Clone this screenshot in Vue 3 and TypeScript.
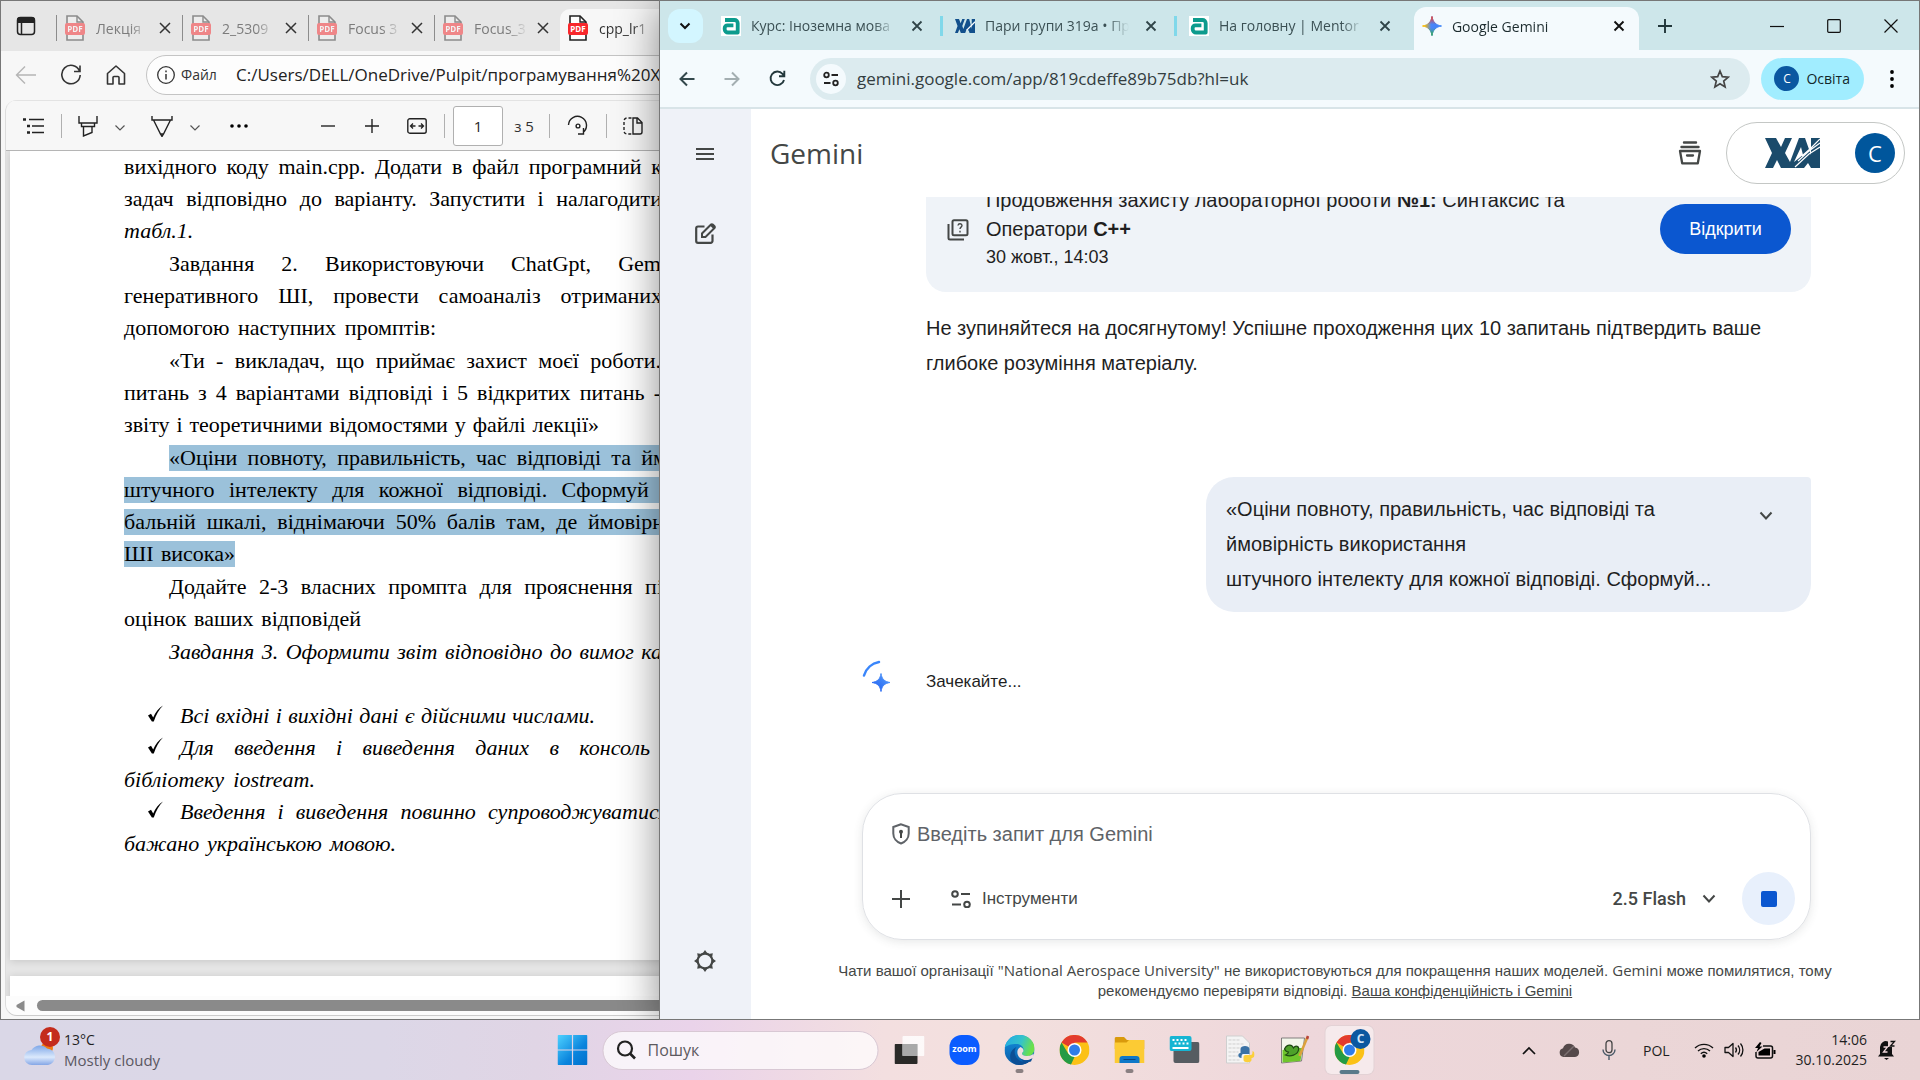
<script setup lang="ts">
interface DocLine {
  text: string
  /** Width of a justified line; natural width when absent. */
  width?: number
  indent?: boolean
  italic?: boolean
  marked?: boolean
  bullet?: boolean
}

const edgeTabs = [
  { title: 'Лекція' },
  { title: '2_5309' },
  { title: 'Focus 3' },
  { title: 'Focus_3' },
]

const chromeTabs = [
  { title: 'Курс: Іноземна мова', icon: 'mentor' },
  { title: 'Пари групи 319а • Пр', icon: 'xai' },
  { title: 'На головну | Mentor', icon: 'mentor' },
]

const paragraphs: DocLine[][] = [
  [
    { text: 'вихідного коду main.cpp. Додати в файл програмний к', width: 538 },
    { text: 'задач відповідно до варіанту. Запустити і налагодити', width: 538 },
    { text: 'табл.1.', italic: true },
  ],
  [
    { text: 'Завдання 2. Використовуючи ChatGpt, Gem', width: 492, indent: true },
    { text: 'генеративного ШІ, провести самоаналіз отриманих', width: 538 },
    { text: 'допомогою наступних промптів:', width: 312 },
  ],
  [
    { text: '«Ти - викладач, що приймає захист моєї роботи.', width: 492, indent: true },
    { text: 'питань з 4 варіантами відповіді і 5 відкритих питань -', width: 537 },
    { text: 'звіту і теоретичними відомостями у файлі лекції»', width: 475 },
  ],
  [
    { text: '«Оціни повноту, правильність, час відповіді та йм', width: 498, indent: true, marked: true },
    { text: 'штучного інтелекту для кожної відповіді. Сформуй з', width: 548, marked: true },
    { text: 'бальній шкалі, віднімаючи 50% балів там, де ймовірн', width: 540, marked: true },
    { text: 'ШІ висока»', width: 111, marked: true },
  ],
  [
    { text: 'Додайте 2-3 власних промпта для прояснення пі', width: 494, indent: true },
    { text: 'оцінок ваших відповідей', width: 237 },
  ],
  [
    { text: 'Завдання 3. Оформити звіт відповідно до вимог ка', width: 493, indent: true, italic: true },
    { text: '\u00a0' },
    { text: 'Всі вхідні і вихідні дані є дійсними числами.', width: 415, italic: true, bullet: true },
    { text: 'Для введення і виведення даних в консоль', width: 470, italic: true, bullet: true },
    { text: 'бібліотеку iostream.', width: 191, italic: true },
    { text: 'Введення і виведення повинно супроводжуватися', width: 489, italic: true, bullet: true },
    { text: 'бажано українською мовою.', width: 272, italic: true },
  ],
]
</script>

<template>
  <div class="desktop">
    <section class="edge" aria-label="Microsoft Edge">
      <div class="edge-tabs">
        <button class="edge-side" aria-label="Вкладки">
          <svg width="20" height="20" viewBox="0 0 20 20"><rect x="1.5" y="1.5" width="17" height="17" rx="3" fill="none" stroke="#222" stroke-width="1.5" /><path d="M1 7V4a3 3 0 0 1 3-3h12a3 3 0 0 1 3 3v3z" fill="#222" /><path d="M5.5 7v11" stroke="#222" stroke-width="1.5" /></svg>
        </button>
        <div v-for="t in edgeTabs" :key="t.title" class="edge-tab">
          <span class="pdf"><svg width="20" height="26" viewBox="0 0 20 26"><path d="M2 1h10l6 6v18H2z" fill="#f4f4f4" stroke="#333" stroke-width="1.6" /><path d="M12 1v6h6" fill="none" stroke="#333" stroke-width="1.4" /></svg><b>PDF</b></span>
          <span class="edge-title">{{ t.title }}</span>
          <button class="x" aria-label="Закрити"><svg width="12" height="12" viewBox="0 0 12 12"><path d="M1 1l10 10M11 1L1 11" stroke="#333" stroke-width="1.5" /></svg></button>
        </div>
        <div class="edge-tab on">
          <span class="pdf"><svg width="20" height="26" viewBox="0 0 20 26"><path d="M2 1h10l6 6v18H2z" fill="#fff" stroke="#222" stroke-width="1.6" /><path d="M12 1v6h6" fill="none" stroke="#222" stroke-width="1.4" /></svg><b>PDF</b></span>
          <span class="edge-title">cpp_lr1</span>
        </div>
      </div>

      <div class="edge-bar">
        <button aria-label="Назад"><svg width="22" height="22" viewBox="0 0 22 22"><path d="M21 11H2M10 2.500L1.500 11l8.500 8.500" fill="none" stroke="#b5b5b5" stroke-width="1.4" /></svg></button>
        <button aria-label="Оновити"><svg width="22" height="22" viewBox="0 0 22 22"><path d="M19.500 7A9.200 9.200 0 1 0 20.200 11M20 1.500V7.500H14" fill="none" stroke="#333" stroke-width="1.600" /></svg></button>
        <button aria-label="Головна"><svg width="22" height="22" viewBox="0 0 22 22"><path d="M2.500 9.500L11 2l8.500 7.500V20H14v-6.500a1 1 0 0 0-1-1H9a1 1 0 0 0-1 1V20H2.500z" fill="none" stroke="#333" stroke-width="1.600" stroke-linejoin="round" /></svg></button>
        <label class="edge-url">
          <svg width="20" height="20" viewBox="0 0 20 20"><circle cx="10" cy="10" r="8.300" fill="none" stroke="#333" stroke-width="1.300" /><path d="M10 9v5.500M10 5.500v1.800" stroke="#333" stroke-width="1.500" /></svg>
          <span>Файл</span>
          <input type="text" value="C:/Users/DELL/OneDrive/Pulpit/програмування%20ХАІ/cpp_lr1.pdf" />
        </label>
      </div>

      <div class="viewer">
        <div class="pdf-bar">
          <button class="b-toc" aria-label="Зміст"><svg width="22" height="18" viewBox="0 0 22 18"><path d="M6 2.500h15M9 9h12M9 15.500h12" stroke="#222" stroke-width="1.500" /><path d="M0 2.500h3M4 9h3M4 15.500h3" stroke="#222" stroke-width="2.400" /></svg></button>
          <i class="bar-sep s1"></i>
          <button class="b-mark" aria-label="Виділити"><svg width="20" height="22" viewBox="0 0 20 22"><path d="M1 1v7h18V1M3.500 8v3.500h13V8M5.500 11.500V21l8.500-3.500v-6" fill="none" stroke="#222" stroke-width="1.400" /></svg></button>
          <button class="b-chev" aria-label="Колір виділення"><svg width="12" height="8" viewBox="0 0 12 8"><path d="M1.500 1.500L6 6l4.500-4.500" fill="none" stroke="#555" stroke-width="1.200" /></svg></button>
          <button class="b-pen" aria-label="Малювати"><svg width="22" height="22" viewBox="0 0 22 22"><path d="M1 1v4h20V1M2.500 5L9.500 19h3l7-14M9.500 19l1.500 2.500 1.500-2.500" fill="none" stroke="#222" stroke-width="1.400" /></svg></button>
          <button class="b-chev" aria-label="Колір пера"><svg width="12" height="8" viewBox="0 0 12 8"><path d="M1.500 1.500L6 6l4.500-4.500" fill="none" stroke="#555" stroke-width="1.200" /></svg></button>
          <button class="b-more" aria-label="Більше"><svg width="18" height="4" viewBox="0 0 18 4"><circle cx="2" cy="2" r="1.800" /><circle cx="9" cy="2" r="1.800" /><circle cx="16" cy="2" r="1.800" /></svg></button>
          <button class="b-minus" aria-label="Зменшити"><svg width="14" height="14" viewBox="0 0 14 14"><path d="M0 7h14" stroke="#333" stroke-width="1.300" /></svg></button>
          <button class="b-plus" aria-label="Збільшити"><svg width="14" height="14" viewBox="0 0 14 14"><path d="M0 7h14M7 0v14" stroke="#222" stroke-width="1.400" /></svg></button>
          <button class="b-fit" aria-label="За шириною"><svg width="20" height="16" viewBox="0 0 20 16"><rect x=".8" y=".8" width="18.400" height="14.400" rx="2" fill="none" stroke="#222" stroke-width="1.400" /><path d="M3.500 8h5M11.500 8h5M6 5.500L3.500 8 6 10.500M14 5.500L16.500 8 14 10.500" fill="none" stroke="#222" stroke-width="1.300" /></svg></button>
          <i class="bar-sep s2"></i>
          <input id="page-no" class="page-no" type="text" value="1" />
          <label class="page-of" for="page-no">з 5</label>
          <i class="bar-sep s3"></i>
          <button class="b-rot" aria-label="Повернути"><svg width="22" height="22" viewBox="0 0 22 22"><path d="M1.500 10A9 9 0 1 1 16 17.500M16.500 13v6h-5.500" fill="none" stroke="#222" stroke-width="1.400" /><circle cx="11" cy="11" r="1.900" fill="none" stroke="#222" stroke-width="1.400" /></svg></button>
          <i class="bar-sep s4"></i>
          <button class="b-view" aria-label="Вигляд сторінки"><svg width="20" height="18" viewBox="0 0 20 18"><path d="M8.500 1H4a3 3 0 0 0-3 3v10a3 3 0 0 0 3 3h4.500" fill="none" stroke="#222" stroke-width="1.400" stroke-dasharray="3 2" /><path d="M10 1h4.500L19 5.500V15a2 2 0 0 1-2 2h-7zM14 1v5h5" fill="none" stroke="#222" stroke-width="1.400" /></svg></button>
        </div>
        <div class="pages">
          <article class="page">
            <div v-for="(p, i) in paragraphs" :key="i" class="para">
              <div v-for="(l, j) in p" :key="j" class="line" :class="{ indent: l.indent, italic: l.italic, bulleted: l.bullet }">
                <svg v-if="l.bullet" class="tick" width="17" height="17" viewBox="0 0 17 17"><path d="M1 10.500l3-1.800 2.200 3.800C8.500 7 11.500 3 16 .5 12 4.500 9 10 6.800 16.500H4.900z" /></svg>
                <span class="run" :class="{ marked: l.marked, justified: l.width }" :style="l.width ? { width: l.width + 'px' } : undefined">{{ l.text }}</span>
              </div>
            </div>
          </article>
          <div class="page next"></div>
        </div>
        <div class="hscroll">
          <svg width="9" height="12" viewBox="0 0 9 12"><path d="M8.500 .5v11L.5 7V5z" fill="#8a8a8a" /></svg>
          <div class="thumb"></div>
        </div>
      </div>
    </section>

    <section class="chrome" aria-label="Google Chrome">
      <div class="strip">
        <button class="tab-search" aria-label="Пошук вкладок"><svg width="12" height="8" viewBox="0 0 12 8"><path d="M1.500 1.500L6 6l4.500-4.500" fill="none" stroke="#111" stroke-width="2" /></svg></button>
        <div v-for="(t, i) in chromeTabs" :key="i" class="ctab">
          <svg v-if="t.icon === 'mentor'" width="20" height="20" viewBox="0 0 20 20"><path d="M0 0h20v20H0z" fill="#fff" /><path d="M4 4h9.500a3.200 3.200 0 0 1 3.200 3.200V16.500H7a3.300 3.300 0 0 1-3.300-3.300V12a2.700 2.700 0 0 1 2.700-2.700h6" fill="none" stroke="#0c9b8d" stroke-width="3.800" stroke-linejoin="round" /></svg>
          <svg v-else width="20" height="14" viewBox="0 0 55 30" preserveAspectRatio="none"><path d="M0 0h11l4.500 9L20 0h7l-7 15 7 15H16l-4-8-4 8H0l7-15zM33 0h6l10 30h-9l-2-5-6-3-4 8h-9zM46 0h9v30h-9z" fill="#12508c" /><path d="M32 24L55 6" stroke="#fff" stroke-width="3" /></svg>
          <span class="ctitle">{{ t.title }}</span>
          <button class="x" aria-label="Закрити"><svg width="12" height="12" viewBox="0 0 12 12"><path d="M1.500 1.500l9 9M10.500 1.500l-9 9" stroke="#2f4448" stroke-width="1.800" /></svg></button>
        </div>
        <div class="ctab active">
          <svg width="20" height="20" viewBox="0 0 20 20">
            <defs>
              <linearGradient id="gemA" x1="0" y1="0" x2="1" y2="0"><stop offset=".1" stop-color="#fbbc04" /><stop offset=".45" stop-color="#4b86f8" /><stop offset="1" stop-color="#3b82f6" /></linearGradient>
              <linearGradient id="gemB" x1="0" y1="0" x2="0" y2="1"><stop offset="0" stop-color="#ea4335" /><stop offset=".42" stop-color="#ea4335" stop-opacity="0" /><stop offset=".6" stop-color="#34a853" stop-opacity="0" /><stop offset="1" stop-color="#34a853" /></linearGradient>
            </defs>
            <path d="M10 .5C10.800 6 14 9.200 19.500 10 14 10.800 10.800 14 10 19.500 9.200 14 6 10.800 .5 10 6 9.200 9.200 6 10 .5z" fill="url(#gemA)" stroke="url(#gemA)" />
            <path d="M10 .5C10.800 6 14 9.200 19.500 10 14 10.800 10.800 14 10 19.500 9.200 14 6 10.800 .5 10 6 9.200 9.200 6 10 .5z" fill="url(#gemB)" stroke="url(#gemB)" />
          </svg>
          <span class="ctitle">Google Gemini</span>
          <button class="x" aria-label="Закрити"><svg width="12" height="12" viewBox="0 0 12 12"><path d="M1.500 1.500l9 9M10.500 1.500l-9 9" stroke="#111" stroke-width="1.900" /></svg></button>
        </div>
        <button class="new-tab" aria-label="Нова вкладка"><svg width="14" height="14" viewBox="0 0 14 14"><path d="M0 7h14M7 0v14" stroke="#22373b" stroke-width="1.900" /></svg></button>
        <div class="win-btns">
          <button aria-label="Згорнути"><svg width="14" height="14" viewBox="0 0 14 14"><path d="M0 7.500h14" stroke="#111" stroke-width="1.200" /></svg></button>
          <button aria-label="Розгорнути"><svg width="14" height="14" viewBox="0 0 14 14"><rect x=".7" y=".7" width="12.600" height="12.600" rx="1" fill="none" stroke="#111" stroke-width="1.200" /></svg></button>
          <button aria-label="Закрити вікно"><svg width="14" height="14" viewBox="0 0 14 14"><path d="M.5 .5l13 13M13.500 .5l-13 13" stroke="#111" stroke-width="1.200" /></svg></button>
        </div>
      </div>

      <div class="cbar">
        <button class="nav" aria-label="Назад"><svg width="16" height="16" viewBox="0 0 16 16"><path d="M15.500 8H2M8 1.500L1.500 8 8 14.500" fill="none" stroke="#33484c" stroke-width="2" /></svg></button>
        <button class="nav" aria-label="Вперед"><svg width="16" height="16" viewBox="0 0 16 16"><path d="M.5 8H14M8 1.500L14.500 8 8 14.500" fill="none" stroke="#a3aeb1" stroke-width="2" /></svg></button>
        <button class="nav" aria-label="Перезавантажити"><svg width="17" height="17" viewBox="0 0 17 17"><path d="M15 10A6.800 6.800 0 1 1 13.500 3.800L15 5.500M15.300 .8v5.400H10" fill="none" stroke="#22373b" stroke-width="1.900" /></svg></button>
        <div class="omni">
          <button class="tune" aria-label="Відомості про сайт"><svg width="16" height="16" viewBox="0 0 16 16"><circle cx="3.500" cy="4" r="2.300" fill="none" stroke="#222" stroke-width="1.800" /><path d="M8.500 4H15M1 12h6.500" stroke="#222" stroke-width="1.900" /><circle cx="12.500" cy="12" r="2.300" fill="none" stroke="#222" stroke-width="1.800" /></svg></button>
          <input type="text" aria-label="Адресний рядок" value="gemini.google.com/app/819cdeffe89b75db?hl=uk" />
          <button class="star" aria-label="Додати закладку"><svg width="20" height="20" viewBox="0 0 20 20"><path d="M10 2l2.300 5.600 6 .5-4.600 3.900 1.400 5.900L10 14.800 4.900 17.900l1.400-5.900L1.700 8.100l6-.5z" fill="none" stroke="#444" stroke-width="1.700" /></svg></button>
        </div>
        <button class="profile"><span class="dot-c">C</span>Освіта</button>
        <button class="kebab" aria-label="Меню"><svg width="4" height="18" viewBox="0 0 4 18"><circle cx="2" cy="2" r="1.900" /><circle cx="2" cy="9" r="1.900" /><circle cx="2" cy="16" r="1.900" /></svg></button>
      </div>

      <div class="app">
        <nav class="side">
          <button aria-label="Головне меню"><svg width="18" height="12" viewBox="0 0 18 12"><path d="M0 1h18M0 6h18M0 11h18" stroke="#444746" stroke-width="2" /></svg></button>
          <button class="compose" aria-label="Новий чат"><svg width="22" height="22" viewBox="0 0 22 22"><path d="M10.500 3.500H4a1.800 1.800 0 0 0-1.800 1.800V18A1.800 1.800 0 0 0 4 19.800h12.700a1.800 1.800 0 0 0 1.800-1.800v-6.500" fill="none" stroke="#444746" stroke-width="2.200" /><path d="M8 14v-3.500l9-9a1.200 1.200 0 0 1 1.700 0l1.800 1.800a1.200 1.200 0 0 1 0 1.700l-9 9z" fill="none" stroke="#444746" stroke-width="2" /><path d="M16 2.500l3.500 3.500 1.500-1.800L18 1z" fill="#444746" /></svg></button>
          <button class="gear" aria-label="Налаштування"><svg width="22" height="22" viewBox="0 0 22 22"><circle cx="11" cy="11" r="7.300" fill="none" stroke="#444746" stroke-width="2.200" /><path d="M11 0l2.500 3.500h-5zM11 22l2.500-3.500h-5zM0 11l3.500-2.500v5zM22 11l-3.500-2.500v5zM3.200 3.200l4.200.7-3.500 3.500zM18.800 3.200l-4.200.7 3.500 3.500zM3.200 18.800l4.200-.7-3.500-3.500zM18.800 18.800l-4.200-.7 3.500-3.500z" fill="#444746" /></svg></button>
        </nav>

        <main class="main">
          <header class="head">
            <h1>Gemini</h1>
            <button class="archive" aria-label="Архів"><svg width="24" height="24" viewBox="0 0 24 24"><path d="M6 1.500h12M3.500 6h17" stroke="#444746" stroke-width="2.400" stroke-linecap="round" /><path d="M2 10h20l-2.200 12.300H4.200zM9 14.500h6" fill="none" stroke="#444746" stroke-width="2.300" stroke-linejoin="round" stroke-linecap="round" /></svg></button>
            <div class="org">
              <svg width="55" height="30" viewBox="0 0 55 30"><path d="M0 0h11l5 9 4-9h7l-7 15 5 9L34 0h6l6 17V0h9v30h-9l-3-5-4 5h-9l3-5-3 5H16l-4-8-4 8H0l7-15z" fill="#1b4b6b" /><path d="M29 24L36 9l2 8z" fill="#fff" /><path d="M30 29L44 16 55 9M33 23L44 13 55 5M37 18L46 10 55 1" fill="none" stroke="#fff" stroke-width="1.200" /></svg>
              <button class="avatar">C</button>
            </div>
          </header>

          <div class="chat">
            <div class="card">
              <svg class="quiz" width="22" height="22" viewBox="0 0 22 22"><rect x="5.500" y="1.300" width="15" height="15" rx="1.500" fill="none" stroke="#444746" stroke-width="2" /><path d="M1.500 5v14a1.500 1.500 0 0 0 1.500 1.500h14" fill="none" stroke="#444746" stroke-width="2" /><path d="M11 6.500c.3-2.400 4-2.200 4 0 0 1.700-2 1.600-2 3.500M13 11.800v1.600" fill="none" stroke="#444746" stroke-width="1.400" /></svg>
              <div class="card-text">
                <p>Продовження захисту лабораторної роботи <b>№1:</b> Синтаксис та<br />Оператори <b>C++</b></p>
                <time>30 жовт., 14:03</time>
              </div>
              <button class="open">Відкрити</button>
            </div>
            <p class="reply">Не зупиняйтеся на досягнутому! Успішне проходження цих 10 запитань підтвердить ваше глибоке розуміння матеріалу.</p>
            <div class="bubble">
              <p>«Оціни повноту, правильність, час відповіді та<br />ймовірність використання<br />штучного інтелекту для кожної відповіді. Сформуй...</p>
              <button aria-label="Розгорнути текст"><svg width="14" height="10" viewBox="0 0 14 10"><path d="M1.500 1.500L7 7.500l5.500-6" fill="none" stroke="#444746" stroke-width="2" /></svg></button>
            </div>
            <div class="wait">
              <svg width="32" height="32" viewBox="0 0 32 32">
                <defs><linearGradient id="sp" x1="0" y1="1" x2="1" y2="0"><stop offset="0" stop-color="#1d5bf0" /><stop offset="1" stop-color="#5aa2fb" /></linearGradient></defs>
                <path d="M2 15.500A19 19 0 0 1 17 2" fill="none" stroke="#3a86fb" stroke-width="2.500" stroke-linecap="round" />
                <path d="M19 13.500c.8 5.500 3.500 8.200 9 9-5.500.8-8.200 3.500-9 9-.8-5.500-3.500-8.200-9-9 5.500-.8 8.200-3.500 9-9z" fill="url(#sp)" stroke="url(#sp)" />
              </svg>
              <p>Зачекайте...</p>
            </div>
          </div>

          <footer class="foot">
            <form class="prompt" @submit.prevent>
              <label class="ask">
                <svg width="18" height="22" viewBox="0 0 18 22"><path d="M9 1.300L1.300 4v6.500c0 4.500 3.200 8.500 7.700 10 4.500-1.500 7.700-5.500 7.700-10V4z" fill="none" stroke="#5f6368" stroke-width="2" /><circle cx="9" cy="8.800" r="2" fill="#444746" /><path d="M9 9v6" stroke="#444746" stroke-width="2" /></svg>
                <input type="text" placeholder="Введіть запит для Gemini" />
              </label>
              <div class="tools">
                <button type="button" class="add" aria-label="Додати файли"><svg width="18" height="18" viewBox="0 0 18 18"><path d="M0 9h18M9 0v18" stroke="#444746" stroke-width="2" /></svg></button>
                <button type="button" class="instr"><svg width="20" height="18" viewBox="0 0 20 18"><circle cx="4" cy="4" r="2.800" fill="none" stroke="#444746" stroke-width="2" /><path d="M10 4h9M1 14.500h9" stroke="#444746" stroke-width="2" /><circle cx="16" cy="14.500" r="2.800" fill="none" stroke="#444746" stroke-width="2" /></svg>Інструменти</button>
                <button type="button" class="model">2.5 Flash<svg width="14" height="10" viewBox="0 0 14 10"><path d="M1.500 1.500L7 7.500l5.500-6" fill="none" stroke="#444746" stroke-width="2" /></svg></button>
                <button type="button" class="stop" aria-label="Зупинити"><i></i></button>
              </div>
            </form>
            <p class="legal">Чати вашої організації <span class="lat">"National Aerospace University"</span> не використовуються для покращення наших моделей. <span class="lat">Gemini</span> може помилятися, тому рекомендуємо перевіряти відповіді. <a href="#">Ваша конфіденційність і Gemini</a></p>
          </footer>
        </main>
      </div>
    </section>

    <footer class="taskbar">
      <button class="weather">
        <span class="cloud">
          <svg width="32" height="34" viewBox="0 0 32 34"><defs><linearGradient id="cl" x1="0" y1="0" x2="0" y2="1"><stop offset="0" stop-color="#7fa8e8" /><stop offset=".6" stop-color="#dbe9fc" /><stop offset="1" stop-color="#84a6e6" /></linearGradient></defs><circle cx="23" cy="15" r="6" fill="#f07a13" /><path d="M8 32a7.500 7.500 0 0 1-.5-15A10 10 0 0 1 23 15.500a8.300 8.300 0 0 1 1 16.500z" fill="url(#cl)" /></svg>
          <b>1</b>
        </span>
        <span class="wtext">13°C<small>Mostly cloudy</small></span>
      </button>
      <div class="center">
        <button class="start" aria-label="Пуск"><svg width="30" height="30" viewBox="0 0 30 30"><defs><linearGradient id="win" x1="0" y1="0" x2="1" y2="1"><stop offset="0" stop-color="#4fd2ff" /><stop offset=".6" stop-color="#0a84dd" /><stop offset="1" stop-color="#0070cc" /></linearGradient></defs><path d="M0 1a1 1 0 0 1 1-1h13.400v14.400H0zM15.600 0H29a1 1 0 0 1 1 1v13.400H15.600zM0 15.600h14.400V30H1a1 1 0 0 1-1-1zM15.600 15.600H30V29a1 1 0 0 1-1 1H15.600z" fill="url(#win)" /></svg></button>
        <label class="search">
          <svg width="20" height="20" viewBox="0 0 20 20"><circle cx="8.500" cy="8.500" r="7" fill="none" stroke="#222" stroke-width="2.200" /><path d="M13.500 13.500l5 5" stroke="#222" stroke-width="2.600" /></svg>
          <input type="text" placeholder="Пошук" />
        </label>
        <div class="apps">
          <button aria-label="Подання завдань"><svg width="30" height="30" viewBox="0 0 30 30"><rect x="0" y="9" width="23" height="20" rx="1" fill="#2a2a28" /><rect x="8" y="1" width="22" height="20" rx="1" fill="#fff" opacity=".82" /><path d="M8 9h15v12H8z" fill="#a9a9a9" /></svg></button>
          <button aria-label="Zoom"><span class="zoom">zoom</span></button>
          <button class="run-app" aria-label="Edge">
            <svg width="30" height="30" viewBox="0 0 30 30"><defs><linearGradient id="e1" x1="0" y1="0" x2="1" y2=".3"><stop offset="0" stop-color="#21a9e6" /><stop offset=".6" stop-color="#35c3c9" /><stop offset="1" stop-color="#6be04b" /></linearGradient><linearGradient id="e2" x1="0" y1="0" x2="0" y2="1"><stop offset="0" stop-color="#1391df" /><stop offset="1" stop-color="#0a5ca8" /></linearGradient></defs><circle cx="15" cy="15" r="15" fill="url(#e2)" /><path d="M.3 13C1.500 5.500 7.500 0 15 0c8.500 0 15 6 15 13.500 0 5-3.500 7.500-7.500 7.500-3 0-5-1-5-2.500 0-1 1.500-1.500 1.500-4 0-3-3-5.500-7-5.500C6.500 9 1.500 10.500 .3 13z" fill="url(#e1)" /><path d="M12 12c-3 3-2.500 10 3 13.500 5 3 10 1 13-3-4 7-12 9-18 6.500C3.500 26 4.500 15 12 12z" fill="#0c4f96" /><path d="M17.500 18.500c0 1.500 2 2.500 5 2.500 3 0 5.500-1 6.500-2.500l1 6-3-.5c-4 2-9 1.500-12-1.500-3-3.500-3-8.500 1-10.500 2 1 3 2 3 3.500 0 1.500-1.500 2-1.500 3z" fill="#f0dde0" /><path d="M15.500 23c4 3.500 9 2.500 12.500 0l-1.500 3.500L20 28z" fill="#0c4f96" /></svg>
          </button>
          <button aria-label="Chrome"><svg width="30" height="30" viewBox="0 0 30 30"><circle cx="15" cy="15" r="15" fill="#fbc116" /><path d="M15 15L2 7.500A15 15 0 0 1 28 7.500H15z" fill="#e33b2e" /><path d="M2 7.500L8.800 18.800 15 22l-3.500 7.600A15 15 0 0 1 2 7.500z" fill="#259b45" /><circle cx="15" cy="15" r="7" fill="#fff" /><circle cx="15" cy="15" r="5.500" fill="#2f7de9" /></svg></button>
          <button class="run-app" aria-label="Провідник"><svg width="30" height="30" viewBox="0 0 30 30"><path d="M0 3.500A1.500 1.500 0 0 1 1.500 2h8l3 3H30v9H0z" fill="#d99a0c" /><path d="M0 7.500h12l2.500-2.500H29a1 1 0 0 1 1 1V28H0z" fill="#fccb34" /><path d="M5 28v-4a3 3 0 0 1 3-3h14a3 3 0 0 1 3 3v4z" fill="#0f78c8" /><path d="M9 24.500h12" stroke="#0a4680" stroke-width="1.200" /></svg></button>
          <button aria-label="Клавіатура"><svg width="30" height="30" viewBox="0 0 30 30"><rect x="4" y="7" width="26" height="21" rx="2" fill="#565c61" /><rect x="0" y="1" width="22" height="15" rx="2" fill="#17b5d3" /><path d="M3 5h16M5 8.500h14" stroke="#fff" stroke-width="2" stroke-dasharray="2 2" /><path d="M3 13h16" stroke="#fff" stroke-width="2" /></svg></button>
          <button aria-label="Python"><svg width="30" height="30" viewBox="0 0 30 30"><path d="M2 1h16l7 7v20H2z" fill="#f4f4f4" stroke="#cfcfcf" /><path d="M4 5h12M4 9h16M4 13h15M4 17h10M4 21h10M4 25h12" stroke="#cfcfcf" stroke-dasharray="3 1" /><path d="M16 18v-4c0-4 9-4 9 0v5h-6c-2 0-2 2-2 4-4 0-4-5-1-5z" fill="#3a72a5" /><path d="M28 16c3 1 3 7-1 7v2c0 3-8 3-8 0v-3c0-2 2-2 3-2h4c2 0 2-2 2-4z" fill="#fbcf3a" /></svg></button>
          <button aria-label="Notepad++"><svg width="30" height="30" viewBox="0 0 30 30"><path d="M2 3h23l-3 23-20 2z" fill="#f3f6ea" stroke="#666" stroke-width=".8" /><path d="M3 15c7-2 13-2 20-2l-2 13-18 1.500z" fill="#6fc52c" /><path d="M5 14c3-6 8-4 9-1 2-3 6-2 5 2-1 5-8 7-13 5 2-1 3-2 3-3-2 0-3-1-4-3z" fill="#4ea12a" stroke="#1e4a12" stroke-width="1.200" /><path d="M28 2L20 21" stroke="#dba13a" stroke-width="2.500" /><path d="M28.500 1l-1 3" stroke="#b9453c" stroke-width="2.500" /></svg></button>
          <button class="cur" aria-label="Chrome, профіль C">
            <svg width="30" height="30" viewBox="0 0 30 30"><circle cx="15" cy="15" r="15" fill="#fbc116" /><path d="M15 15L2 7.500A15 15 0 0 1 28 7.500H15z" fill="#e33b2e" /><path d="M2 7.500L8.800 18.800 15 22l-3.500 7.600A15 15 0 0 1 2 7.500z" fill="#259b45" /><circle cx="15" cy="15" r="7" fill="#fff" /><circle cx="15" cy="15" r="5.500" fill="#2f7de9" /></svg>
            <b>C</b>
          </button>
        </div>
      </div>
      <div class="tray">
        <button class="t-up" aria-label="Приховані піктограми"><svg width="14" height="9" viewBox="0 0 14 9"><path d="M1 8l6-6 6 6" fill="none" stroke="#111" stroke-width="1.700" /></svg></button>
        <button class="t-cloud" aria-label="OneDrive"><svg width="21" height="14" viewBox="0 0 21 14"><path d="M4.500 14A4.500 4.500 0 0 1 4 5.200 6.500 6.500 0 0 1 16 4.500 4.800 4.800 0 0 1 16 14z" fill="#55494a" /><path d="M5 13L15 3" stroke="#7c7071" stroke-width="1.500" /></svg></button>
        <button class="t-mic" aria-label="Мікрофон"><svg width="14" height="20" viewBox="0 0 14 20"><rect x="4" y=".7" width="6" height="12" rx="3" fill="none" stroke="#444" stroke-width="1.300" /><path d="M1 9.500a6 6 0 0 0 12 0M7 15.500V20" fill="none" stroke="#4a5a68" stroke-width="1.400" /></svg></button>
        <button class="t-lang">POL</button>
        <button class="t-sys" aria-label="Мережа, гучність, акумулятор">
          <svg width="20" height="16" viewBox="0 0 20 16"><path d="M1 6a13 13 0 0 1 18 0M4 9a8.700 8.700 0 0 1 12 0M6.800 11.700a4.800 4.800 0 0 1 6.400 0" fill="none" stroke="#111" stroke-width="1.400" /><circle cx="10" cy="14" r="1.800" /></svg>
          <svg width="21" height="16" viewBox="0 0 21 16"><path d="M1 5.500h3.500L9 1.500v13l-4.500-4H1z" fill="none" stroke="#111" stroke-width="1.300" stroke-linejoin="round" /><path d="M11.500 5.500a4 4 0 0 1 0 5M14 3.500a7 7 0 0 1 0 9M16.500 1.500a10 10 0 0 1 0 13" fill="none" stroke="#111" stroke-width="1.300" /></svg>
          <svg width="21" height="17" viewBox="0 0 21 17"><path d="M8 4h7.500A2 2 0 0 1 17.500 6v8a2 2 0 0 1-2 2H3a2 2 0 0 1-2-2v-4" fill="none" stroke="#111" stroke-width="1.500" /><path d="M9.500 6.500H15V13.500H3.500V10z" /><path d="M18.500 8h2v4h-2z" /><path d="M5 0L0 6h3L1.500 10 7.500 4.500h-3L6.500 1z" /></svg>
        </button>
        <button class="clock"><span>14:06</span><span>30.10.2025</span></button>
        <button class="t-bell" aria-label="Сповіщення"><svg width="18" height="20" viewBox="0 0 18 20"><path d="M2 14V7a6 6 0 0 1 8-5.500V7h4v7l2 2.500H0z" fill="#111" /><path d="M6 18h5l-2.500 2z" fill="#111" /><path d="M5.500 7h4l-4 5h4" fill="none" stroke="#eed6da" stroke-width="1.300" /><path d="M12.500 1.500h4l-4 4.500h4" fill="none" stroke="#111" stroke-width="1.300" /></svg></button>
      </div>
    </footer>
  </div>
</template>

<style>
body { margin: 0; }
</style>

<style scoped>
.desktop {
  position: relative;
  display: flex;
  flex-direction: column;
  justify-content: flex-end;
  height: 100vh;
  min-height: 720px;
  overflow: hidden;
  background: #dcd6e6;
  font-family: "Open Sans", "Noto Sans", sans-serif;
  color: #1f1f1f;
}
* { box-sizing: border-box; }
button { border: 0; background: none; padding: 0; margin: 0; font: inherit; color: inherit; display: inline-flex; align-items: center; justify-content: center; flex: none; }
input { border: 0; background: none; padding: 0; margin: 0; font: inherit; color: inherit; outline: 0; min-width: 0; }
svg { display: block; flex: none; }
p, h1 { margin: 0; }

/* Edge window */
.edge {
  position: absolute;
  top: 0;
  left: 0;
  bottom: 60px;
  width: 50%;
  display: flex;
  flex-direction: column;
  overflow: hidden;
  border: 1px solid #777;
  background: #f7f7f7;
}
.edge-tabs { display: flex; height: 50px; flex: none; background: #e6e6e6; }
.edge-side { width: 54px; padding-right: 4px; }
.edge-tab { display: flex; align-items: center; width: 126px; flex: none; padding: 4px 0 0 9px; font-size: 14px; color: #7c7c7c; position: relative; }
.edge-tab:not(.on)::before { content: ""; width: 1px; height: 26px; background: #8c8c8c; margin: 0 8px 0 -8px; }
.edge-tab .pdf { opacity: .5; }
.edge-tab.on { margin: 8px 0 0 1px; padding: 0 0 4px 8px; background: #f7f7f7; border-radius: 10px 0 0 0; color: #333; width: 300px; }
.edge-tab.on .pdf { opacity: 1; }
.pdf { position: relative; display: block; width: 20px; }
.pdf b { position: absolute; left: 0; top: 8px; width: 20px; height: 12px; background: #f9282c; color: #fff; font-size: 8px; line-height: 12px; text-align: center; border-radius: 2px; }
.edge-title { width: 52px; margin-left: 11px; overflow: hidden; white-space: nowrap; mask-image: linear-gradient(90deg, #000 65%, rgba(0, 0, 0, .1)); }
.edge-tab .x { margin-left: 11px; }
.edge-bar { display: flex; align-items: center; height: 47px; flex: none; padding: 0 0 0 14px; gap: 23px; }
.edge-url { display: flex; align-items: center; flex: 1; height: 40px; margin-left: -4px; border: 1px solid #c4c4c4; border-radius: 20px; background: #fdfdfd; padding-left: 9px; font-size: 17px; color: #222; }
.edge-url span { margin: 0 18px 0 5px; font-size: 14px; color: #333; width: 37px; }
.edge-url input { flex: 1; }
.viewer { display: flex; flex-direction: column; flex: 1; min-height: 0; margin: 2px 0 3px 4px; border-radius: 12px 0 0 12px; overflow: hidden; border-left: 1px solid #ddd; border-bottom: 1px solid #ccc; background: #e6e6e6; }
.pdf-bar { display: flex; align-items: center; height: 51px; flex: none; background: #f7f7f7; border-top: 1px solid #e3e3e3; border-bottom: 1px solid #b5b5b5; padding-left: 17px; }
.bar-sep { width: 1px; height: 24px; background: #b0b0b0; }
.s1 { margin: 0 16px; }
.b-chev { margin: 4px 0 0 16px; }
.b-pen { margin-left: 25px; }
.b-more { margin-left: 29px; }
.b-minus { margin-left: 73px; }
.b-plus { margin-left: 30px; }
.b-fit { margin-left: 28px; }
.s2 { margin: 0 8px 0 17px; }
.page-no { width: 50px; height: 40px; border: 1px solid #b0b0b0; border-radius: 3px; background: #fff; text-align: center; font-size: 15px; }
.page-of { width: 34px; text-align: center; font-size: 15px; color: #333; margin: 0 8px 0 4px; }
.b-rot { margin: 0 17px; }
.b-view { margin-left: 16px; }
.pages { flex: 1; min-height: 0; overflow: hidden; padding-left: 4px; display: flex; flex-direction: column; gap: 16px; }
.page { flex: none; height: 809px; background: #fff; padding-left: 114px; font-family: "Liberation Serif", serif; font-size: 22px; line-height: 32px; color: #000; overflow: hidden; box-shadow: 0 1px 8px rgba(0, 0, 0, .15); }
.page.next { height: 80px; }
.para { margin-bottom: 1px; }
.line { display: flex; height: 32px; align-items: center; white-space: nowrap; }
.indent { padding-left: 45px; }
.italic { font-style: italic; }
.bulleted { padding-left: 23px; }
.tick { margin-right: 16px; margin-bottom: 6px; }
.run { display: block; flex: none; line-height: 26px; }
.justified { text-align: justify; text-align-last: justify; }
.marked { background: #9bc1da; }
.hscroll { display: flex; align-items: center; gap: 12px; height: 19px; flex: none; background: #fcfcfc; padding-left: 10px; }
.thumb { flex: 1; height: 11px; border-radius: 6px; background: #8a8a8a; }

/* Chrome window */
.chrome {
  position: absolute;
  top: 0;
  right: 0;
  bottom: 60px;
  left: 34.32%;
  display: flex;
  flex-direction: column;
  border: 1px solid #777;
  background: #f4fafd;
  box-shadow: 0 6px 40px rgba(0, 0, 0, .45);
}
.strip { display: flex; align-items: center; height: 49px; flex: none; background: #cde6ea; padding-left: 8px; font-size: 14px; color: #3b5054; }
.tab-search { width: 35px; height: 34px; border-radius: 12px; background: #d3f6ff; margin-right: 6px; }
.ctab { display: flex; align-items: center; width: 234px; flex: none; padding: 0 17px 0 12px; border-right: 3px solid #80d8ea; height: 20px; }
.ctab:nth-child(4) { border-right-color: transparent; }
.ctitle { flex: 1; margin: 0 16px 0 10px; overflow: hidden; white-space: nowrap; mask-image: linear-gradient(90deg, #000 85%, transparent); }
.ctab.active { width: 225px; height: 43px; margin: 6px 0 0 3px; padding: 0 14px 5px 8px; border: 0; border-radius: 12px 12px 0 0; background: #f4fafd; color: #1c2b2e; }
.new-tab { margin-left: 19px; }
.win-btns { display: flex; gap: 43px; margin-left: auto; padding-right: 21px; }
.cbar { display: flex; align-items: center; height: 59px; flex: none; border-bottom: 2px solid #d8e4e8; padding: 0 25px 0 19px; }
.nav { width: 17px; margin-right: 28px; }
.nav:nth-child(3) { margin-right: 24px; }
.omni { display: flex; align-items: center; flex: 1; height: 42px; border-radius: 21px; background: #dcebef; padding: 0 20px 0 6px; font-size: 17px; color: #333d40; }
.omni input { flex: 1; margin-left: 11px; }
.tune { width: 30px; height: 30px; border-radius: 50%; background: #f4fafd; }
.profile { height: 42px; margin-left: 11px; padding: 0 14px 0 13px; border-radius: 21px; background: #a1edff; font-size: 14px; gap: 7px; color: #12272b; }
.dot-c { width: 25px; height: 25px; border-radius: 50%; background: #0b57a0; color: #fff; font-size: 12px; line-height: 25px; text-align: center; }
.kebab { margin-left: 26px; }
.app { display: flex; flex: 1; min-height: 0; background: #fff; font-family: "Liberation Sans", sans-serif; }
.side { display: flex; flex-direction: column; align-items: center; width: 91px; flex: none; background: #eff2f8; padding: 39px 0 47px; }
.compose { margin-top: 63px; }
.gear { margin-top: auto; }
.main { display: flex; flex-direction: column; flex: 1; min-width: 0; }
.head { display: flex; align-items: center; height: 88px; flex: none; padding: 0 14px 0 19px; }
.head h1 { flex: 1; font: 400 28px/32px "Open Sans", sans-serif; color: #444746; }
.archive { margin-right: 24px; }
.org { display: flex; align-items: center; justify-content: space-between; width: 179px; height: 62px; border: 1px solid #c4c7c5; border-radius: 31px; padding: 0 9px 0 38px; }
.avatar { width: 40px; height: 40px; border-radius: 50%; background: #00569c; color: #fff; font: 22px/40px "Open Sans", sans-serif; }
.chat { display: flex; flex-direction: column; flex: 1; min-height: 0; overflow: hidden; padding: 0 108px 0 111px; font-size: 20px; line-height: 35px; }
.card { display: flex; align-items: center; margin-left: 64px; height: 95px; flex: none; background: #eff3f8; border-radius: 0 0 20px 20px; padding: 0 20px 0 21px; }
.card-text { flex: 1; margin: -32px 0 0 17px; }
.card-text p { line-height: 29px; white-space: nowrap; }
.card-text b { font-weight: 600; }
.card-text time { display: block; font-size: 18px; line-height: 27px; }
.quiz { margin-top: -30px; }
.open { width: 131px; height: 50px; margin-top: -32px; border-radius: 25px; background: #0b57d0; color: #fff; font-size: 18px; line-height: 24px; }
.reply { margin: 19px 0 0 64px; }
.bubble { display: flex; align-items: flex-start; justify-content: space-between; align-self: flex-end; width: 605px; margin-top: 96px; padding: 15px 38px 15px 20px; background: #e9eef6; border-radius: 28px 4px 28px 28px; }
.bubble button { margin-top: 19px; }
.wait { display: flex; margin-top: 48px; font-size: 17px; line-height: 44px; }
.wait p { margin-left: 32px; }
.foot { flex: none; padding: 0 72px 18px; }
.prompt { margin: 0 36px 0 39px; height: 147px; border: 1px solid #dfe1e5; border-radius: 40px; box-shadow: 0 2px 10px rgba(60, 64, 67, .12); padding: 26px 15px 14px 29px; display: flex; flex-direction: column; justify-content: space-between; }
.ask { display: flex; align-items: center; gap: 7px; height: 28px; font-size: 20px; }
.ask input { flex: 1; color: #5f6368; }
.ask input::placeholder { color: #5f6368; opacity: 1; }
.tools { display: flex; align-items: center; font-size: 17px; color: #444746; }
.instr { gap: 11px; margin-left: 41px; }
.model { gap: 16px; margin-left: auto; margin-right: 26px; font-family: Roboto, sans-serif; font-size: 18px; font-weight: 500; }
.stop { width: 53px; height: 53px; border-radius: 50%; background: #e8f0fc; }
.stop i { width: 16px; height: 16px; border-radius: 2px; background: #0b57d0; }
.legal { margin-top: 20px; text-align: center; font-size: 15px; line-height: 20px; color: #444746; }
.legal a { color: inherit; }
.lat { font-family: "Open Sans", sans-serif; }

/* Taskbar */
.taskbar { position: relative; display: flex; align-items: center; height: 60px; padding: 0 24px; background: linear-gradient(90deg, #dad7e7 0%, #dcd7e7 20%, #e0d5e5 28%, #ead3ea 36%, #f3dfe0 46%, #f3e0de 52%, #eed7db 68%, #ebd6d7 85%, #e9d4d5 100%); }
.weather { gap: 8px; text-align: left; }
.cloud { position: relative; display: block; width: 32px; }
.cloud b { position: absolute; right: -4px; top: -6px; width: 20px; height: 20px; border-radius: 50%; background: #c42b1c; color: #fff; font-size: 12px; line-height: 20px; text-align: center; }
.wtext { display: flex; flex-direction: column; font-size: 14px; line-height: 20px; }
.wtext small { font-size: 15px; color: #5a5762; }
.center { position: absolute; left: 50%; top: 0; height: 60px; transform: translateX(-50%); display: flex; align-items: center; gap: 15px; padding-left: 11px; }
.search { display: flex; align-items: center; width: 276px; height: 39px; border: 1px solid #d8c8d4; border-radius: 20px; background: rgba(255, 255, 255, .72); padding-left: 13px; gap: 11px; font-size: 16px; }
.search input { flex: 1; }
.search input::placeholder { color: #5d5a60; opacity: 1; }
.apps { display: flex; gap: 7px; margin-left: -8px; }
.apps button { position: relative; width: 48px; height: 48px; border-radius: 6px; }
.zoom { width: 30px; height: 30px; border-radius: 12px; background: #0b5cff; color: #fff; font: 700 9px/28px "Open Sans", sans-serif; text-align: center; }
.run-app::after { content: ""; position: absolute; bottom: 1px; left: 20px; width: 8px; height: 4px; border-radius: 2px; background: #8a8082; }
.apps .cur { background: #f6eaec; box-shadow: 0 0 0 1px #e3d2d5; }
.cur::after { content: ""; position: absolute; bottom: 0; left: 14px; width: 20px; height: 4px; border-radius: 2px; background: #5a7a8a; }
.cur b { position: absolute; top: 3px; right: 3px; width: 20px; height: 20px; border-radius: 50%; background: #0b57a0; color: #cfe3f7; font-size: 12px; line-height: 20px; text-align: center; }
.tray { display: flex; align-items: center; margin-left: auto; font-size: 14px; }
.t-cloud { margin-left: 23px; }
.t-mic { margin-left: 22px; }
.t-lang { margin-left: 27px; }
.t-sys { margin-left: 24px; gap: 10px; }
.clock { flex-direction: column; align-items: flex-end; line-height: 20px; margin-left: 20px; }
.t-bell { margin-left: 11px; }
</style>
